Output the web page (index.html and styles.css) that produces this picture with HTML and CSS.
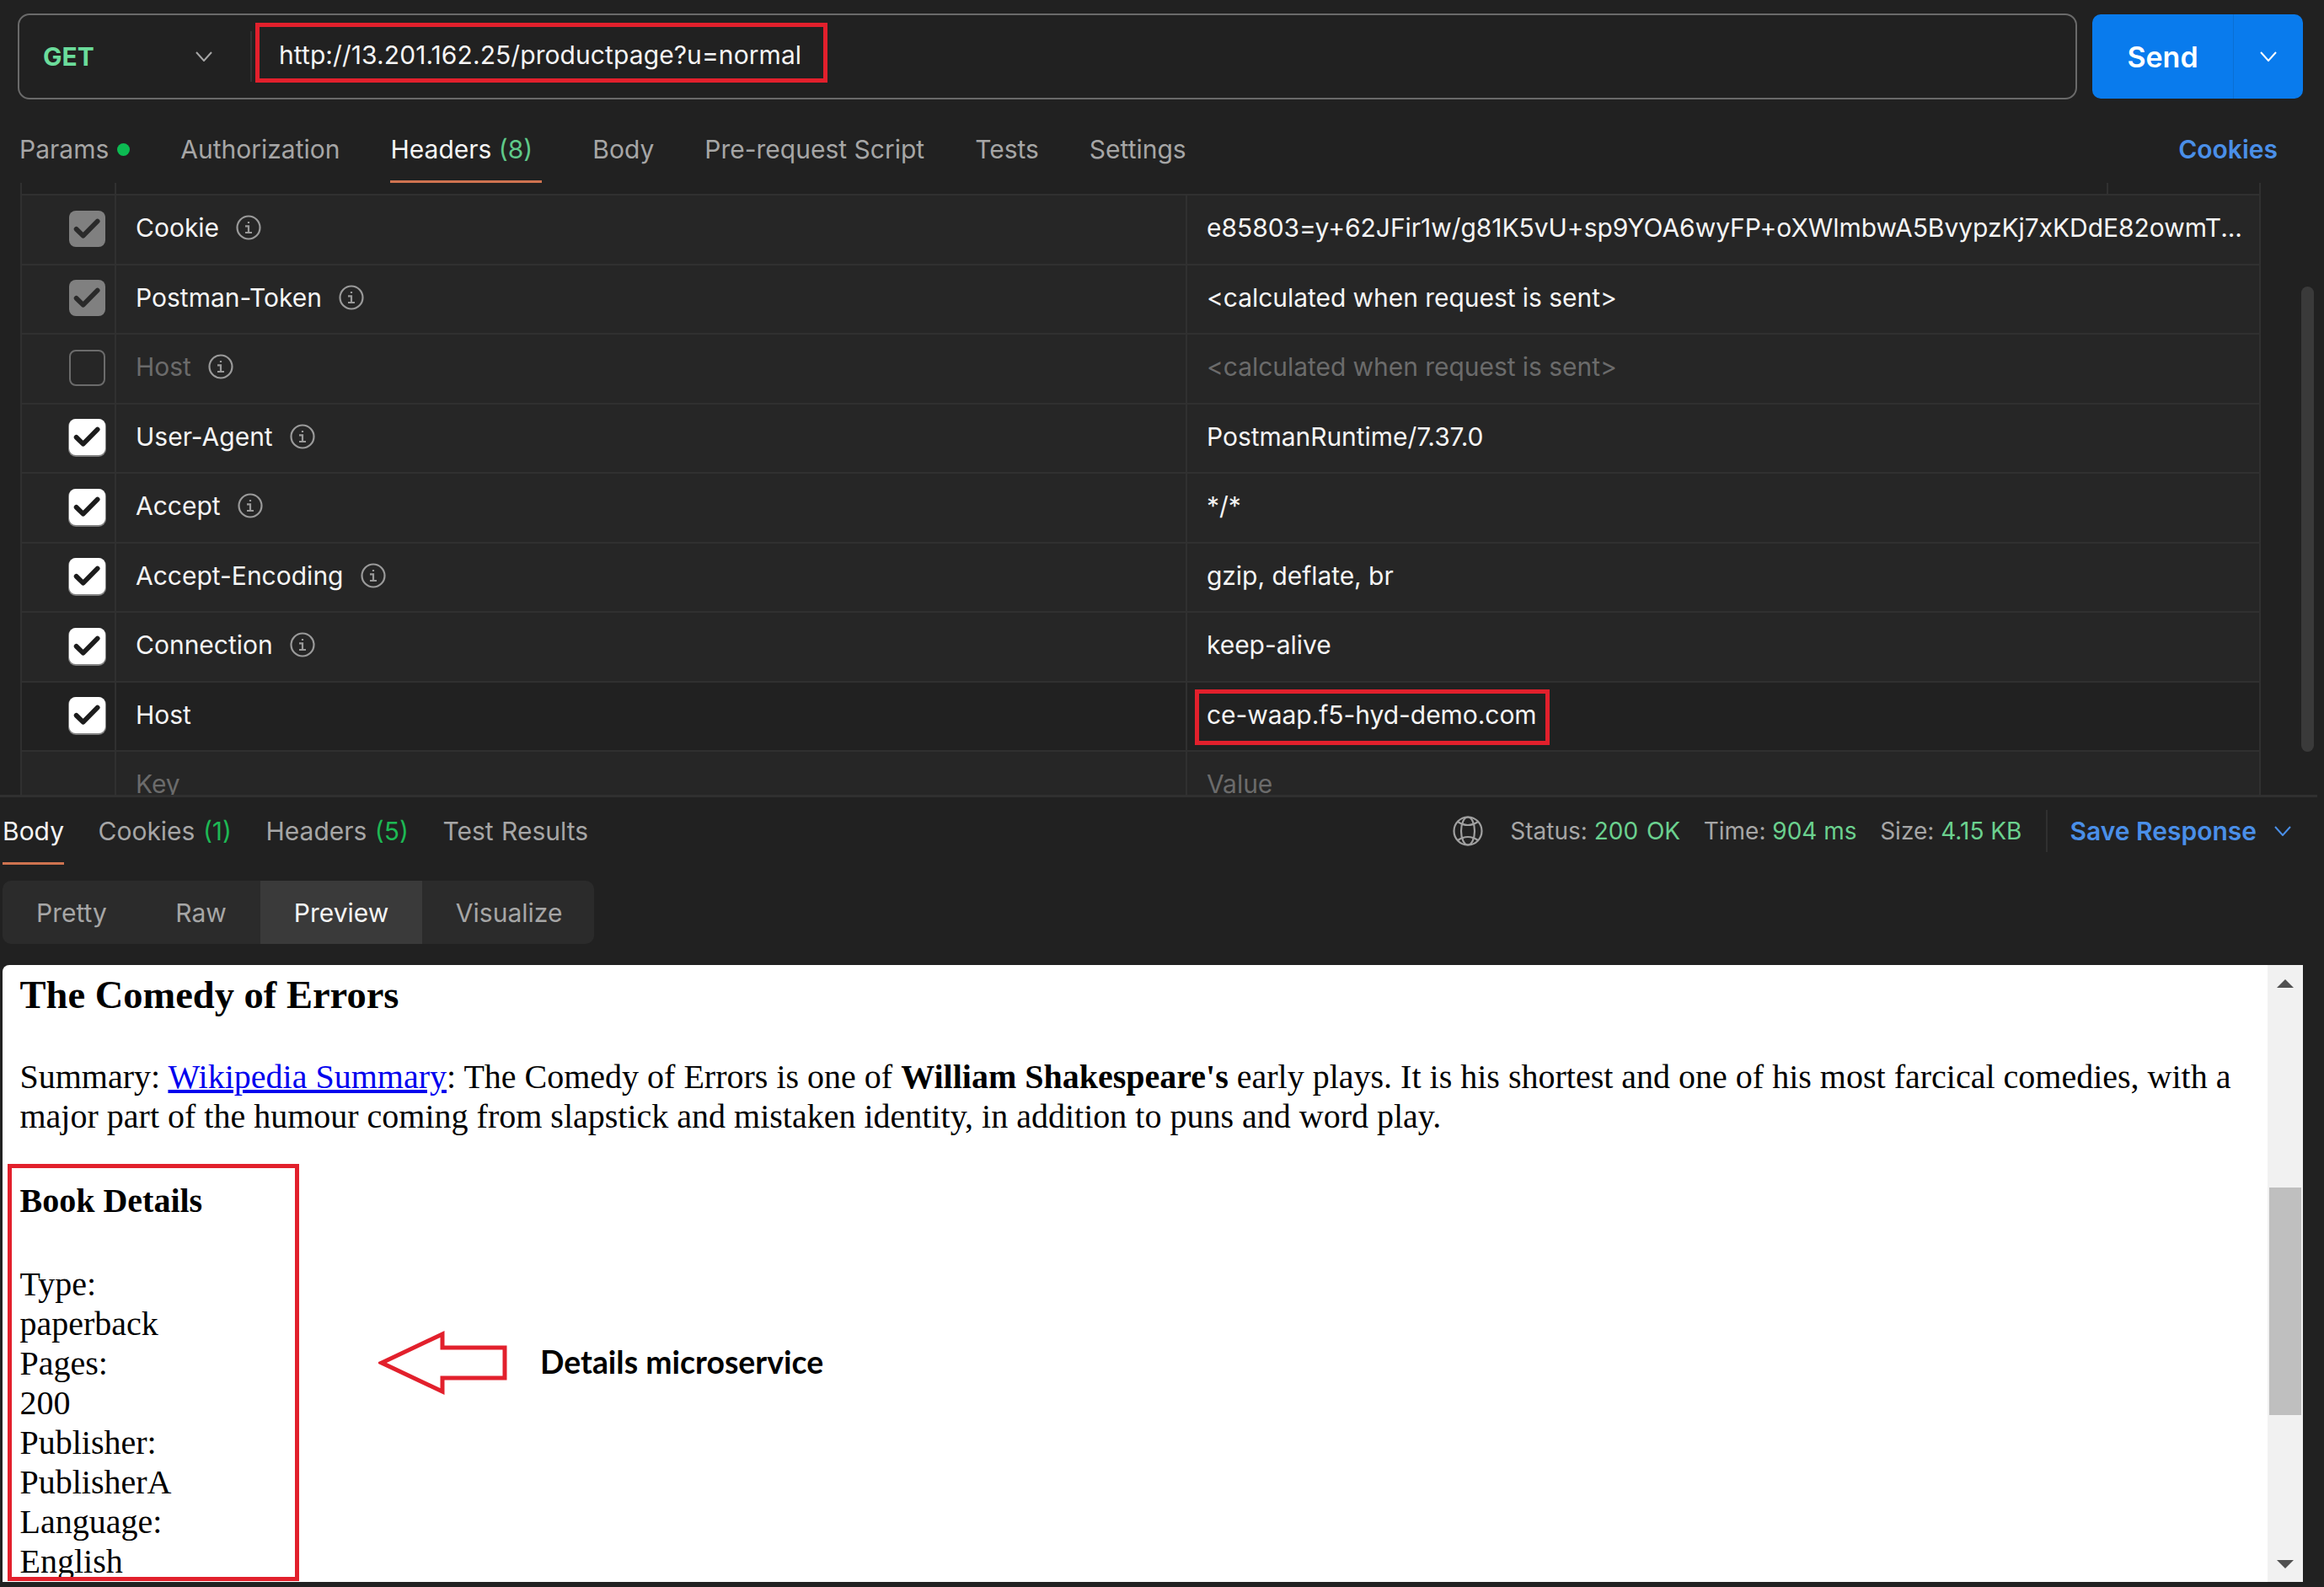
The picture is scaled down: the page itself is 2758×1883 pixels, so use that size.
FILE: index.html
```html
<!DOCTYPE html>
<html lang="en">

<head>
  <meta charset="UTF-8">
  <title>Postman - productpage</title>
  <link rel="stylesheet" href="styles.css">
</head>

<body>
  <div class="page">
    <!-- Request bar -->
    <div class="url-row">
      <div class="url-box">
        <div class="method">
          <span class="method-name">GET</span>
          <svg class="chevron" viewBox="0 0 20 12"><path d="M1 1l9 10 9-10" /></svg>
        </div>
        <div class="url-text">http://13.201.162.25/productpage?u=normal</div>
      </div>
      <div class="send-btn">
        <span class="send-label">Send</span>
        <span class="send-more">
          <svg class="chevron chevron-white" viewBox="0 0 20 12"><path d="M1 1l9 10 9-10" /></svg>
        </span>
      </div>
    </div>

    <!-- Request tabs -->
    <div class="req-tabs">
      <div class="tab">Params<span class="dot"></span></div>
      <div class="tab">Authorization</div>
      <div class="tab tab-headers active">Headers <span class="count">(8)</span></div>
      <div class="tab">Body</div>
      <div class="tab">Pre-request Script</div>
      <div class="tab">Tests</div>
      <div class="tab">Settings</div>
      <div class="tab-cookies">Cookies</div>
    </div>

    <!-- Headers table -->
    <div class="headers-wrap">
      <div class="headers-stub">
        <div class="stub-check"></div>
        <div class="stub-key"></div>
        <div class="stub-desc"></div>
      </div>
      <div class="hrow">
        <div class="cell-check"><span class="box box-auto"><svg viewBox="0 0 24 24"><path d="M4.800 12.200l4.500 4.400L18.800 7" /></svg></span></div>
        <div class="cell-key">Cookie<svg class="info" viewBox="0 0 30 30"><circle cx="15" cy="15" r="13.500" /><path d="M11 13.300h4v7.700M11 21h8M15 8v2" /></svg></div>
        <div class="cell-value">e85803=y+62JFir1w/g81K5vU+sp9YOA6wyFP+oXWlmbwA5BvypzKj7xKDdE82owmT...</div>
      </div>
      <div class="hrow">
        <div class="cell-check"><span class="box box-auto"><svg viewBox="0 0 24 24"><path d="M4.800 12.200l4.500 4.400L18.800 7" /></svg></span></div>
        <div class="cell-key">Postman-Token<svg class="info" viewBox="0 0 30 30"><circle cx="15" cy="15" r="13.500" /><path d="M11 13.300h4v7.700M11 21h8M15 8v2" /></svg></div>
        <div class="cell-value">&lt;calculated when request is sent&gt;</div>
      </div>
      <div class="hrow row-off">
        <div class="cell-check"><span class="box box-empty"></span></div>
        <div class="cell-key">Host<svg class="info" viewBox="0 0 30 30"><circle cx="15" cy="15" r="13.500" /><path d="M11 13.300h4v7.700M11 21h8M15 8v2" /></svg></div>
        <div class="cell-value">&lt;calculated when request is sent&gt;</div>
      </div>
      <div class="hrow">
        <div class="cell-check"><span class="box box-on"><svg viewBox="0 0 24 24"><path d="M4.800 12.200l4.500 4.400L18.800 7" /></svg></span></div>
        <div class="cell-key">User-Agent<svg class="info" viewBox="0 0 30 30"><circle cx="15" cy="15" r="13.500" /><path d="M11 13.300h4v7.700M11 21h8M15 8v2" /></svg></div>
        <div class="cell-value">PostmanRuntime/7.37.0</div>
      </div>
      <div class="hrow">
        <div class="cell-check"><span class="box box-on"><svg viewBox="0 0 24 24"><path d="M4.800 12.200l4.500 4.400L18.800 7" /></svg></span></div>
        <div class="cell-key">Accept<svg class="info" viewBox="0 0 30 30"><circle cx="15" cy="15" r="13.500" /><path d="M11 13.300h4v7.700M11 21h8M15 8v2" /></svg></div>
        <div class="cell-value">*/*</div>
      </div>
      <div class="hrow">
        <div class="cell-check"><span class="box box-on"><svg viewBox="0 0 24 24"><path d="M4.800 12.200l4.500 4.400L18.800 7" /></svg></span></div>
        <div class="cell-key">Accept-Encoding<svg class="info" viewBox="0 0 30 30"><circle cx="15" cy="15" r="13.500" /><path d="M11 13.300h4v7.700M11 21h8M15 8v2" /></svg></div>
        <div class="cell-value">gzip, deflate, br</div>
      </div>
      <div class="hrow">
        <div class="cell-check"><span class="box box-on"><svg viewBox="0 0 24 24"><path d="M4.800 12.200l4.500 4.400L18.800 7" /></svg></span></div>
        <div class="cell-key">Connection<svg class="info" viewBox="0 0 30 30"><circle cx="15" cy="15" r="13.500" /><path d="M11 13.300h4v7.700M11 21h8M15 8v2" /></svg></div>
        <div class="cell-value">keep-alive</div>
      </div>
      <div class="hrow row-hover">
        <div class="cell-check"><span class="box box-on"><svg viewBox="0 0 24 24"><path d="M4.800 12.200l4.500 4.400L18.800 7" /></svg></span></div>
        <div class="cell-key">Host</div>
        <div class="cell-value">ce-waap.f5-hyd-demo.com</div>
      </div>
      <div class="hrow row-new">
        <div class="cell-check"></div>
        <div class="cell-key">Key</div>
        <div class="cell-value">Value</div>
      </div>
      <div class="pane-scroll"></div>
    </div>

    <!-- Response -->
    <div class="res-bar">
      <div class="tab active">Body</div>
      <div class="tab">Cookies <span class="count-dark">(1)</span></div>
      <div class="tab">Headers <span class="count-dark">(5)</span></div>
      <div class="tab">Test Results</div>
      <div class="res-meta">
        <svg class="globe" viewBox="0 0 36 36"><circle cx="18" cy="18" r="16.500" /><ellipse cx="18" cy="18" rx="8" ry="16.500" /><path d="M6 7q12 8 24 0M6 29q12-8 24 0" /></svg>
        <span class="meta-item">Status: <b class="status-ok">200 OK</b></span>
        <span class="meta-item">Time: <b>904 ms</b></span>
        <span class="meta-item">Size: <b>4.15 KB</b></span>
        <span class="meta-sep"></span>
        <span class="save-btn">Save Response</span>
        <svg class="chevron chevron-blue" viewBox="0 0 20 12"><path d="M1 1l9 10 9-10" /></svg>
      </div>
    </div>

    <div class="view-modes">
      <div class="mode mode-first">Pretty</div>
      <div class="mode">Raw</div>
      <div class="mode mode-active">Preview</div>
      <div class="mode mode-last">Visualize</div>
    </div>

    <div class="preview">
      <div class="preview-body">
        <h2>The Comedy of Errors</h2>
        <p class="summary">Summary: <a href="#">Wikipedia Summary</a>: The Comedy of Errors is one of <b>William Shakespeare's</b> early plays. It is his shortest and one of his most farcical comedies, with a major part of the humour coming from slapstick and mistaken identity, in addition to puns and word play.</p>
        <h4>Book Details</h4>
        <div class="details">
          Type:<br>paperback<br>Pages:<br>200<br>Publisher:<br>PublisherA<br>Language:<br>English
        </div>
      </div>
      <div class="scrollbar">
        <span class="arrow-up"></span>
        <span class="thumb"></span>
        <span class="arrow-down"></span>
      </div>
    </div>

    <!-- Red annotations drawn over the screenshot -->
    <div class="mark mark-url"></div>
    <div class="mark mark-host"></div>
    <div class="mark mark-details"></div>
    <svg class="mark-arrow" viewBox="0 0 156 76"><path d="M4 38L76 4v16h74v36H76v16z" /></svg>
    <div class="mark-label">Details microservice</div>
  </div>
</body>

</html>
```

FILE: styles.css
```css
/* Page */
body {
  margin: 0;
  background-color: #212121;
  font-family: Inter, "Noto Sans", sans-serif;
  font-size: 30px;
  color: #f5f5f5;
}

.page {
  position: relative;
  width: 2758px;
  height: 1883px;
  overflow: hidden;
  display: flex;
  flex-direction: column;
}

.chevron {
  width: 20px;
  height: 12px;
  fill: none;
  stroke: #a6a6a6;
  stroke-width: 2;
}

.chevron-white {
  stroke: #fff;
}

.chevron-blue {
  stroke: #4a8fe8;
  margin-left: 21px;
}

/* Request bar */
.url-row {
  display: flex;
  gap: 18px;
  padding: 16px 25px 0 21px;
  height: 102px;
}

.url-box {
  flex: 1;
  display: flex;
  align-items: center;
  box-sizing: border-box;
  border: 2px solid #6a6a6a;
  border-radius: 14px;
}

.method {
  display: flex;
  align-items: center;
  justify-content: space-between;
  box-sizing: border-box;
  width: 276px;
  height: 60px;
  padding: 0 45px 0 28px;
  border-right: 2px solid #333;
}

.method-name {
  color: #6bdc9b;
  font-weight: 700;
  font-size: 30px;
}

.url-text {
  padding: 0 0 5px 32px;
  letter-spacing: 0.08px;
}

.send-btn {
  display: flex;
  align-items: center;
  width: 250px;
  height: 100px;
  margin-top: 1px;
  background-color: #097bed;
  border-radius: 10px;
  color: #fff;
  font-size: 34px;
  font-weight: 600;
}

.send-label {
  width: 167px;
  text-align: center;
}

.send-more {
  flex: 1;
  height: 100%;
  display: flex;
  align-items: center;
  justify-content: center;
  border-left: 1px solid #0a6fd4;
}

/* Tabs */
.req-tabs {
  display: flex;
  gap: 60px;
  margin-top: 19px;
  padding: 0 55px 0 23px;
  height: 80px;
}

.tab {
  height: 80px;
  line-height: 80px;
  color: #a6a6a6;
  white-space: nowrap;
}

.tab.active {
  color: #f5f5f5;
  box-shadow: inset 0 -3px 0 #cf7350;
}

.tab-headers {
  padding-right: 11px;
}

.dot {
  display: inline-block;
  width: 15px;
  height: 15px;
  margin-left: 10px;
  border-radius: 50%;
  background-color: #0cbb52;
  vertical-align: 3px;
}

.count {
  color: #5fc98a;
}

.count-dark {
  color: #1db954;
}

.tab-cookies {
  margin-left: auto;
  line-height: 80px;
  color: #4a8fe8;
  font-weight: 600;
}

/* Headers table */
.headers-wrap {
  position: relative;
  height: 726px;
  overflow: hidden;
}

.headers-stub {
  display: flex;
  height: 13px;
  margin-left: 24px;
  width: 2659px;
  box-sizing: border-box;
  border-left: 2px solid #303030;
  border-right: 2px solid #303030;
}

.stub-check {
  width: 110px;
  border-right: 2px solid #303030;
}

.stub-key {
  flex: 1;
}

.stub-desc {
  width: 179px;
  border-left: 2px solid #303030;
}

.hrow {
  display: flex;
  align-items: stretch;
  box-sizing: border-box;
  width: 2659px;
  height: 82.5px;
  margin-left: 24px;
  background-color: #262626;
  border-top: 2px solid #303030;
  border-left: 2px solid #303030;
  border-right: 2px solid #303030;
}

.row-hover {
  background-color: #212121;
}

.cell-check {
  display: flex;
  align-items: center;
  justify-content: flex-end;
  box-sizing: border-box;
  width: 112px;
  padding: 0 11px 2px 0;
  border-right: 2px solid #303030;
}

.cell-key {
  display: flex;
  align-items: center;
  box-sizing: border-box;
  width: 1271px;
  padding: 0 0 4px 23px;
  border-right: 2px solid #303030;
}

.cell-value {
  display: flex;
  align-items: center;
  flex: 1;
  padding: 0 0 4px 23px;
  letter-spacing: -0.05px;
  white-space: nowrap;
  overflow: hidden;
}

.row-off .cell-key,
.row-off .cell-value,
.row-new .cell-key,
.row-new .cell-value {
  color: #6b6b6b;
}

.box {
  display: block;
  box-sizing: border-box;
  width: 43px;
  height: 43px;
  border-radius: 8px;
}

.box svg {
  display: block;
  width: 100%;
  height: 100%;
  fill: none;
  stroke: #1c1c1c;
  stroke-width: 3.200;
  stroke-linecap: round;
  stroke-linejoin: round;
}

.box-on {
  background-color: #fff;
  box-shadow: 0 1px 0 1px #808080;
}

.box-auto {
  background-color: #808080;
}

.box-auto svg {
  stroke: #2a2a2a;
}

.box-empty {
  border: 2px solid #6b6b6b;
}

.info {
  width: 30px;
  height: 30px;
  margin-left: 20px;
  fill: none;
  stroke: #9a9a9a;
  stroke-width: 2.200;
}

.pane-scroll {
  position: absolute;
  left: 2731px;
  top: 123px;
  width: 15px;
  height: 552px;
  border-radius: 8px;
  background-color: #3a3a3a;
}

/* Response */
.res-bar {
  display: flex;
  gap: 40.500px;
  box-sizing: border-box;
  height: 83px;
  padding-left: 3px;
  border-top: 3px solid #303030;
  width: 2750px;
}

.res-bar .tab {
  word-spacing: 1px;
}

.res-meta {
  display: flex;
  align-items: center;
  margin-left: auto;
  padding-right: 31px;
  height: 80px;
  font-size: 28px;
  color: #a6a6a6;
}

.globe {
  width: 36px;
  height: 36px;
  margin-right: 32px;
  fill: none;
  stroke: #a0a0a0;
  stroke-width: 2.200;
}

.meta-item {
  margin-right: 27.500px;
}

.meta-item b {
  font-weight: 400;
  color: #6bd18f;
}

.meta-item .status-ok {
  word-spacing: 2px;
}

.meta-sep {
  width: 2px;
  height: 50px;
  background-color: #303030;
  margin: 0 26px 0 1.500px;
}

.save-btn {
  color: #4a8fe8;
  font-size: 30px;
  font-weight: 600;
}

.view-modes {
  display: flex;
  align-self: flex-start;
  margin: 19px 0 25px 3px;
  height: 75px;
  background-color: #2b2b2b;
  border-radius: 10px;
  overflow: hidden;
}

.mode {
  padding: 0 40px;
  line-height: 77px;
  color: #a6a6a6;
}

.mode-first {
  padding-right: 41.500px;
}

.mode-last {
  padding: 0 38px 0 39.500px;
}

.mode-active {
  background-color: #3a3a3a;
  color: #f5f5f5;
}

/* Preview pane */
.preview {
  display: flex;
  width: 2730px;
  height: 732px;
  margin-left: 3px;
  background-color: #fff;
  border-top-left-radius: 8px;
  overflow: hidden;
  color: #000;
  font-family: "Liberation Serif", serif;
  font-size: 40px;
  line-height: 47px;
}

.preview-body {
  flex: 1;
  padding: 12px 21px 0 20.500px;
}

.preview-body h2 {
  margin: 0;
  font-size: 46.500px;
  line-height: 47px;
}

.summary {
  margin: 50px 0 0;
}

.preview-body h4 {
  margin: 53px 0 52px;
  font-size: 40px;
}

.scrollbar {
  display: flex;
  flex-direction: column;
  align-items: center;
  width: 42px;
  background-color: #f1f1f1;
}

.arrow-up {
  margin-top: 17px;
  border-left: 10px solid transparent;
  border-right: 10px solid transparent;
  border-bottom: 10px solid #505050;
}

.thumb {
  width: 38px;
  height: 270px;
  margin-top: 237px;
  background-color: #bfbfbf;
}

.arrow-down {
  margin-top: 172px;
  border-left: 10px solid transparent;
  border-right: 10px solid transparent;
  border-top: 10px solid #505050;
}

/* Annotations */
.mark {
  position: absolute;
  box-sizing: border-box;
  border: 5px solid #e2202c;
}

.mark-url {
  left: 303px;
  top: 27px;
  width: 679px;
  height: 71px;
}

.mark-host {
  left: 1418px;
  top: 818px;
  width: 421px;
  height: 66px;
}

.mark-details {
  left: 9px;
  top: 1381px;
  width: 346px;
  height: 495px;
}

.mark-arrow {
  position: absolute;
  left: 449px;
  top: 1579px;
  width: 156px;
  height: 76px;
  fill: none;
  stroke: #e2202c;
  stroke-width: 5;
}

.mark-label {
  position: absolute;
  left: 641px;
  top: 1596px;
  color: #000;
  font-family: Lato, "Open Sans", sans-serif;
  font-weight: 700;
  font-size: 37.400px;
  line-height: 40px;
  white-space: nowrap;
}
```
